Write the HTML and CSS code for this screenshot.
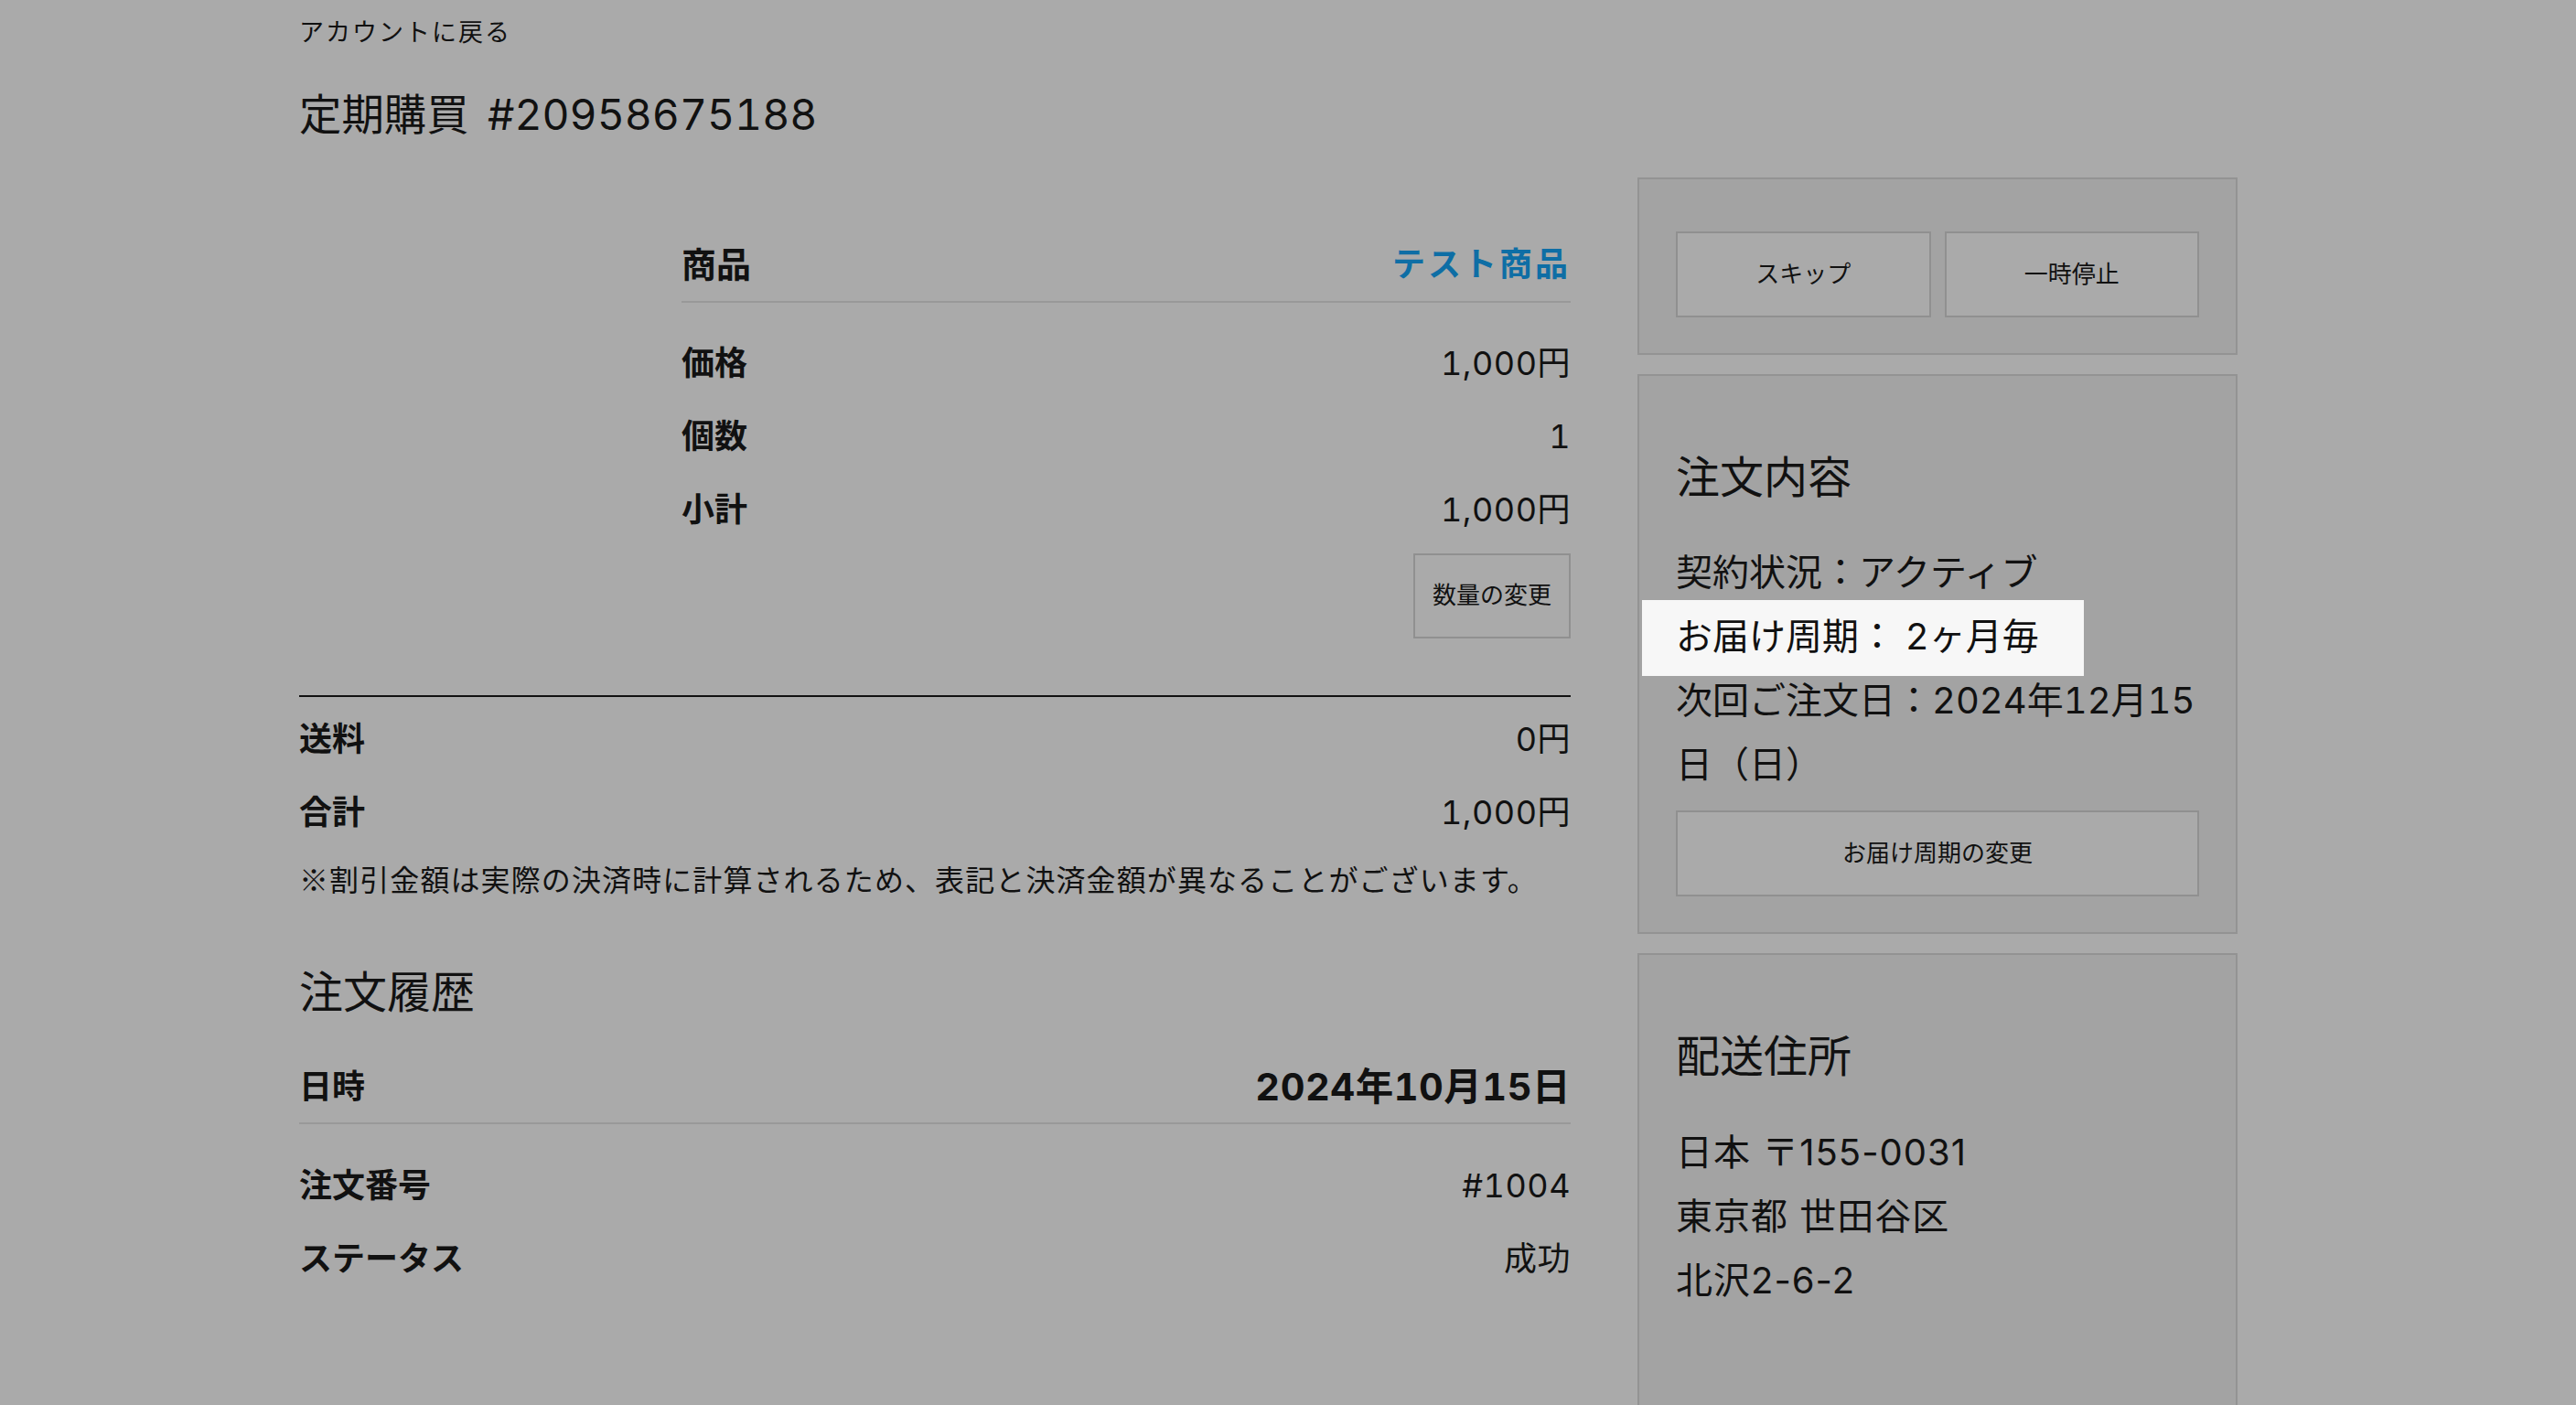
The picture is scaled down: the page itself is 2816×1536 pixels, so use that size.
FILE: index.html
```html
<!DOCTYPE html>
<html lang="ja">
<head>
<meta charset="utf-8">
<title>定期購買 #20958675188</title>
<link rel="stylesheet" href="styles.css">
</head>
<body>
<div class="page">
  <a class="back" href="#">アカウントに戻る</a>
  <h1 class="title">定期購買 #20958675188</h1>
  <div class="layout">
    <main class="main">
      <section class="product">
        <div class="product-table">
          <div class="row row-head"><span class="label">商品</span><span class="value link">テスト商品</span></div>
          <div class="row"><span class="label">価格</span><span class="value">1,000円</span></div>
          <div class="row"><span class="label">個数</span><span class="value">1</span></div>
          <div class="row"><span class="label">小計</span><span class="value">1,000円</span></div>
          <div class="qty"><button class="btn btn-qty">数量の変更</button></div>
        </div>
      </section>
      <section class="totals">
        <div class="row"><span class="label">送料</span><span class="value">0円</span></div>
        <div class="row"><span class="label">合計</span><span class="value">1,000円</span></div>
        <p class="note">※割引金額は実際の決済時に計算されるため、表記と決済金額が異なることがございます。</p>
      </section>
      <section class="history">
        <h2 class="section-title">注文履歴</h2>
        <div class="row row-head row-date"><span class="label">日時</span><span class="value date">2024年10月15日</span></div>
        <div class="row"><span class="label">注文番号</span><span class="value">#1004</span></div>
        <div class="row"><span class="label">ステータス</span><span class="value">成功</span></div>
      </section>
    </main>
    <aside class="aside">
      <div class="panel panel-actions">
        <button class="btn btn-action">スキップ</button>
        <button class="btn btn-action">一時停止</button>
      </div>
      <div class="panel">
        <h2 class="panel-title">注文内容</h2>
        <div class="info">
          <div class="info-line">契約状況：アクティブ</div>
          <div class="info-line highlight">お届け周期： 2ヶ月毎</div>
          <div class="info-line">次回ご注文日：2024年12月15日（日）</div>
        </div>
        <button class="btn btn-wide">お届け周期の変更</button>
      </div>
      <div class="panel panel-address">
        <h2 class="panel-title">配送住所</h2>
        <div class="info">
          <div class="info-line">日本 〒155-0031</div>
          <div class="info-line">東京都 世田谷区</div>
          <div class="info-line">北沢2-6-2</div>
        </div>
      </div>
    </aside>
  </div>
</div>
</body>
</html>
```

FILE: styles.css
```css
* {
  box-sizing: border-box;
}

html, body {
  margin: 0;
  padding: 0;
}

body {
  background: #aaaaaa;
  color: #111111;
  font-family: Inter, "Noto Sans CJK JP", "Noto Sans", sans-serif;
  font-variant-numeric: tabular-nums;
}

.page {
  width: 2119px;
  margin-left: 327px;
}

.back {
  display: block;
  padding-top: 18px;
  font-size: 27px;
  line-height: 36px;
  letter-spacing: 2px;
  color: #111111;
  text-decoration: none;
}

.title {
  margin: 39px 0 0;
  font-size: 46.4px;
  font-weight: 400;
  line-height: 64px;
  word-spacing: 8px;
}

.layout {
  display: flex;
  align-items: flex-start;
  gap: 73px;
  margin-top: 37px;
}

.main {
  width: 1390px;
  flex: none;
}

.aside {
  width: 656px;
  flex: none;
  display: flex;
  flex-direction: column;
  gap: 21px;
}

/* rows */
.row {
  display: flex;
  justify-content: space-between;
  align-items: center;
  height: 80px;
  font-size: 36px;
  line-height: 80px;
}

.row .label {
  font-weight: 700;
}

.row .value {
  letter-spacing: 0.5px;
}

.row .value.link {
  color: #0e6ea5;
  font-weight: 700;
  letter-spacing: 3px;
}

.row .value.date {
  font-size: 41.5px;
  font-weight: 700;
  letter-spacing: 0.5px;
}

.row-head {
  height: auto;
  line-height: 50px;
  padding-top: 70px;
  padding-bottom: 15px;
  border-bottom: 2px solid #999999;
  margin-bottom: 26px;
}

.row-head .label {
  font-size: 38px;
}

/* product */
.product {
  display: flex;
  padding-left: 418px;
}

.product-table {
  flex: 1;
}

.qty {
  display: flex;
  justify-content: flex-end;
  margin-top: 8px;
}

.btn {
  font-family: inherit;
  color: #111111;
  background: #aaaaaa;
  border: 2px solid #909090;
  border-radius: 0;
  padding: 0 0 6px;
  margin: 0;
  font-size: 26px;
  cursor: pointer;
}

.btn-qty {
  width: 172px;
  height: 93px;
}

/* totals */
.totals {
  margin-top: 62px;
  border-top: 2px solid #111111;
  padding-top: 6px;
}

.note {
  margin: 7px 0 0;
  font-family: "Noto Sans CJK JP", sans-serif;
  font-size: 32px;
  line-height: 50px;
  letter-spacing: 1.1px;
}

/* history */
.section-title {
  margin: 68px 0 0;
  font-size: 48px;
  font-weight: 400;
  line-height: 64px;
}

.row-date {
  padding-top: 0;
  margin-top: 46px;
  padding-bottom: 14px;
  margin-bottom: 27px;
}

.row-date .label {
  font-size: 36px;
}

/* panels */
.panel {
  background: #a3a3a3;
  border: 2px solid #939393;
  padding: 40px 40px 39px;
}

.panel-actions {
  display: flex;
  gap: 15px;
  padding-top: 57px;
}

.btn-action {
  flex: 1;
  height: 94px;
}

.panel-title {
  margin: 39px 0 0;
  font-size: 48px;
  font-weight: 400;
  line-height: 64px;
}

.info {
  margin-top: 37px;
}

.info-line {
  font-size: 40px;
  line-height: 70px;
}

.highlight {
  width: 483px;
  margin: -5px 0 -8px -37px;
  padding: 5px 0 8px 37px;
  background: #f7f7f7;
}

.btn-wide {
  display: block;
  width: 100%;
  height: 94px;
  margin-top: 15px;
}

.panel-address {
  padding-bottom: 160px;
}

.panel-address .info {
  margin-top: 38px;
}

.panel-address .info-line {
  font-variant-numeric: normal;
  letter-spacing: 1px;
}
```
